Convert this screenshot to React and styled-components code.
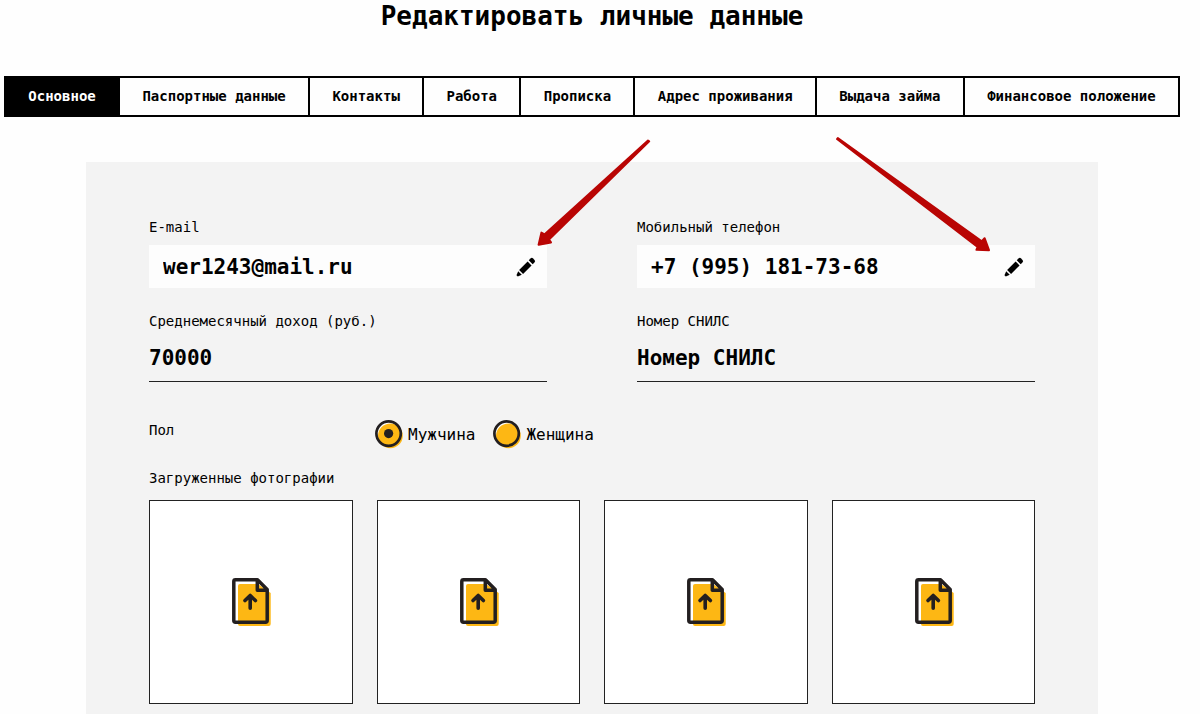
import React, { useState } from 'react';
import styled, { createGlobalStyle } from 'styled-components';

const GlobalStyle = createGlobalStyle`
    *, *::before, *::after {
        box-sizing: border-box;
    }
    body {
        margin: 0;
        background: #fefefe;
        color: #000;
        font-family: 'DejaVu Sans Mono', 'Liberation Mono', monospace;
    }
    button, input {
        font-family: inherit;
        color: inherit;
    }
`

const Page = styled.main`
    display: flex;
    flex-direction: column;
    min-height: 100vh;
    padding: 0 20px 0 4px;
`

const Title = styled.h1`
    margin: 0 0 44px;
    font-size: 26px;
    line-height: 32px;
    text-align: center;
`

const Tabs = styled.nav`
    display: flex;
    border: 2px solid #000;
`

const Tab = styled.button`
    flex: 1 1 auto;
    padding: 10px 0;
    border: 0;
    border-left: ${props => props.$first ? '0' : '2px solid #000'};
    background: ${props => props.$active ? '#000' : 'transparent'};
    color: ${props => props.$active ? '#fff' : '#000'};
    font-size: 14px;
    line-height: 17px;
    font-weight: bold;
    white-space: nowrap;
    cursor: pointer;
`

const Panel = styled.form`
    flex: 1;
    margin: 45px 82px 0;
    padding: 55px 63px 10px;
    background: #f3f3f3;
`

const Fields = styled.div`
    display: grid;
    grid-template-columns: 1fr 1fr;
    gap: 23px 90px;
`

const Field = styled.div`
    display: flex;
    flex-direction: column;
    gap: 8px;
    min-width: 0;
`

const Label = styled.label`
    font-size: 14px;
    line-height: 20px;
`

const Caption = styled.div`
    font-size: 14px;
    line-height: 20px;
`

const TextInput = styled.input`
    width: 100%;
    height: 43px;
    padding: 0 0 4px;
    border: 0;
    border-bottom: 1px solid #222;
    border-radius: 0;
    outline: 0;
    background: transparent;
    font-size: 21px;
    font-weight: bold;
    &::placeholder {
        color: #000;
        opacity: 1;
    }
`

const EditBox = styled.div`
    position: relative;
    display: flex;
    align-items: center;
    height: 43px;
    padding: 0 11px 0 14px;
    background: #fdfdfd;
`

const BoxInput = styled(TextInput)`
    flex: 1;
    min-width: 0;
    padding: 0;
    border: 0;
`

const EditButton = styled.button`
    display: flex;
    padding: 0;
    border: 0;
    background: none;
    cursor: pointer;
`

// pointer arrow drawn over the box and everything around it
const Pointer = styled.svg`
    position: absolute;
    top: ${props => props.$top}px;
    right: ${props => props.$right}px;
    z-index: 1;
    pointer-events: none;
    fill: #b90504;
    stroke: #b90504;
    stroke-width: 2;
    stroke-linejoin: round;
`

const GenderRow = styled.div`
    display: flex;
    align-items: flex-start;
    margin: 38px 0 19px;
`

const GenderCaption = styled(Caption)`
    flex: 0 0 226px;
`

const Radios = styled.div`
    display: flex;
    gap: 18px;
`

const RadioLabel = styled.label`
    display: flex;
    align-items: center;
    gap: 4px;
    font-size: 16px;
    line-height: 20px;
    cursor: pointer;
`

const RadioMark = styled.span`
    display: grid;
    & > * {
        grid-area: 1 / 1;
        width: 29px;
        height: 29px;
        margin: 0;
    }
    input {
        opacity: 0;
        cursor: pointer;
    }
    svg .dot {
        display: none;
    }
    input:checked + svg .dot {
        display: inline;
    }
`

const Photos = styled.div`
    display: grid;
    grid-template-columns: repeat(4, 1fr);
    gap: 24px;
    margin-top: 12px;
`

const PhotoButton = styled.button`
    display: flex;
    align-items: center;
    justify-content: center;
    aspect-ratio: 1;
    padding: 0;
    border: 1px solid #222;
    background: #fff;
    cursor: pointer;
`

const PencilIcon = () => (
    <svg width="20" height="20" viewBox="0 0 20 20" aria-hidden="true">
        <g transform="translate(1 19) rotate(-45)">
            <path d="M0.2 -1 L4.2 -2.5 V2.5 L0.2 1 Z" />
            <path d="M5.8 -2.8 H17.8 V2.8 H5.8 Z" />
            <path d="M19.4 -2.8 H21.8 Q23.8 -2.8 23.8 -1 V1 Q23.8 2.8 21.8 2.8 H19.4 Z" />
        </g>
    </svg>
)

const FileIcon = () => (
    <svg width="41" height="48" viewBox="-2 0 41 48" fill="none" aria-hidden="true">
        <path d="M8 6 H26 L38.7 15 V46 Q38.7 48 36.7 48 H8 Q6 48 6 46 V8 Q6 6 8 6 Z" fill="#fdb714" />
        <path
            d="M3.5 1.8 H25.5 L35.2 11.5 V42.5 Q35.2 44.2 33.5 44.2 H3.5 Q1.8 44.2 1.8 42.5 V3.5 Q1.8 1.8 3.5 1.8 Z M25.3 2 V12.2 H35"
            stroke="#231f20" strokeWidth="3.5" strokeLinejoin="round"
        />
        <path d="M18.2 30.2 V18 M13 22.6 L18.2 17.4 L23.4 22.6" stroke="#231f20" strokeWidth="3.6" strokeLinecap="round" strokeLinejoin="round" />
    </svg>
)

const Radio = ({ text, ...rest }) => (
    <RadioLabel>
        <RadioMark>
            <input type="radio" name="gender" {...rest} />
            <svg viewBox="0 0 29 29" aria-hidden="true">
                <circle cx="13.5" cy="13.5" r="12" fill="#fff" />
                <circle cx="15.4" cy="15.8" r="12.4" fill="#fdb714" />
                <circle cx="13.6" cy="13.6" r="12.2" fill="none" stroke="#231f20" strokeWidth="2.7" />
                <circle className="dot" cx="13.6" cy="13.6" r="4.6" fill="#231f20" />
            </svg>
        </RadioMark>
        {text}
    </RadioLabel>
)

const tabs = [
    'Основное',
    'Паспортные данные',
    'Контакты',
    'Работа',
    'Прописка',
    'Адрес проживания',
    'Выдача займа',
    'Финансовое положение',
]

export default function App() {
    const [active, setActive] = useState(0);
    const [gender, setGender] = useState('male');

    return (
        <>
            <GlobalStyle />
            <Page>
                <Title>Редактировать личные данные</Title>
                <Tabs>
                    {tabs.map((tab, i) => (
                        <Tab key={tab} type="button" $first={i === 0} $active={i === active} onClick={() => setActive(i)}>{tab}</Tab>
                    ))}
                </Tabs>

                <Panel onSubmit={e => e.preventDefault()}>
                    <Fields>
                        <Field>
                            <Label htmlFor="email">E-mail</Label>
                            <EditBox>
                                <BoxInput type="email" id="email" name="email" defaultValue="wer1243@mail.ru" />
                                <EditButton type="button" aria-label="Изменить e-mail"><PencilIcon /></EditButton>
                                <Pointer $top={-107} $right={-105} width="117" height="111" viewBox="0 0 117 111" aria-hidden="true">
                                    <path d="M113 2.6 L114.2 3.4 L14 101.6 L16 104.4 L3.6 106.8 L6.4 94.6 L9.4 96.4 Z" />
                                </Pointer>
                            </EditBox>
                        </Field>
                        <Field>
                            <Label htmlFor="phone">Мобильный телефон</Label>
                            <EditBox>
                                <BoxInput type="tel" id="phone" name="phone" defaultValue="+7 (995) 181-73-68" />
                                <EditButton type="button" aria-label="Изменить телефон"><PencilIcon /></EditButton>
                                <Pointer $top={-109} $right={42} width="159" height="118" viewBox="0 0 159 118" aria-hidden="true">
                                    <path d="M3.8 2 L3 3 L143.6 111 L142.4 113.8 L155 114.2 L150.6 102.2 L147.8 105.2 Z" />
                                </Pointer>
                            </EditBox>
                        </Field>
                        <Field>
                            <Label htmlFor="income">Среднемесячный доход (руб.)</Label>
                            <TextInput type="text" id="income" name="income" defaultValue="70000" />
                        </Field>
                        <Field>
                            <Label htmlFor="snils">Номер СНИЛС</Label>
                            <TextInput type="text" id="snils" name="snils" placeholder="Номер СНИЛС" />
                        </Field>
                    </Fields>

                    <GenderRow>
                        <GenderCaption id="gender">Пол</GenderCaption>
                        <Radios role="radiogroup" aria-labelledby="gender">
                            <Radio text="Мужчина" value="male" checked={gender === 'male'} onChange={() => setGender('male')} />
                            <Radio text="Женщина" value="female" checked={gender === 'female'} onChange={() => setGender('female')} />
                        </Radios>
                    </GenderRow>

                    <Caption>Загруженные фотографии</Caption>
                    <Photos>
                        {[1, 2, 3, 4].map(n => (
                            <PhotoButton key={n} type="button" aria-label={`Загрузить фото ${n}`}>
                                <FileIcon />
                            </PhotoButton>
                        ))}
                    </Photos>
                </Panel>
            </Page>
        </>
    )
}
